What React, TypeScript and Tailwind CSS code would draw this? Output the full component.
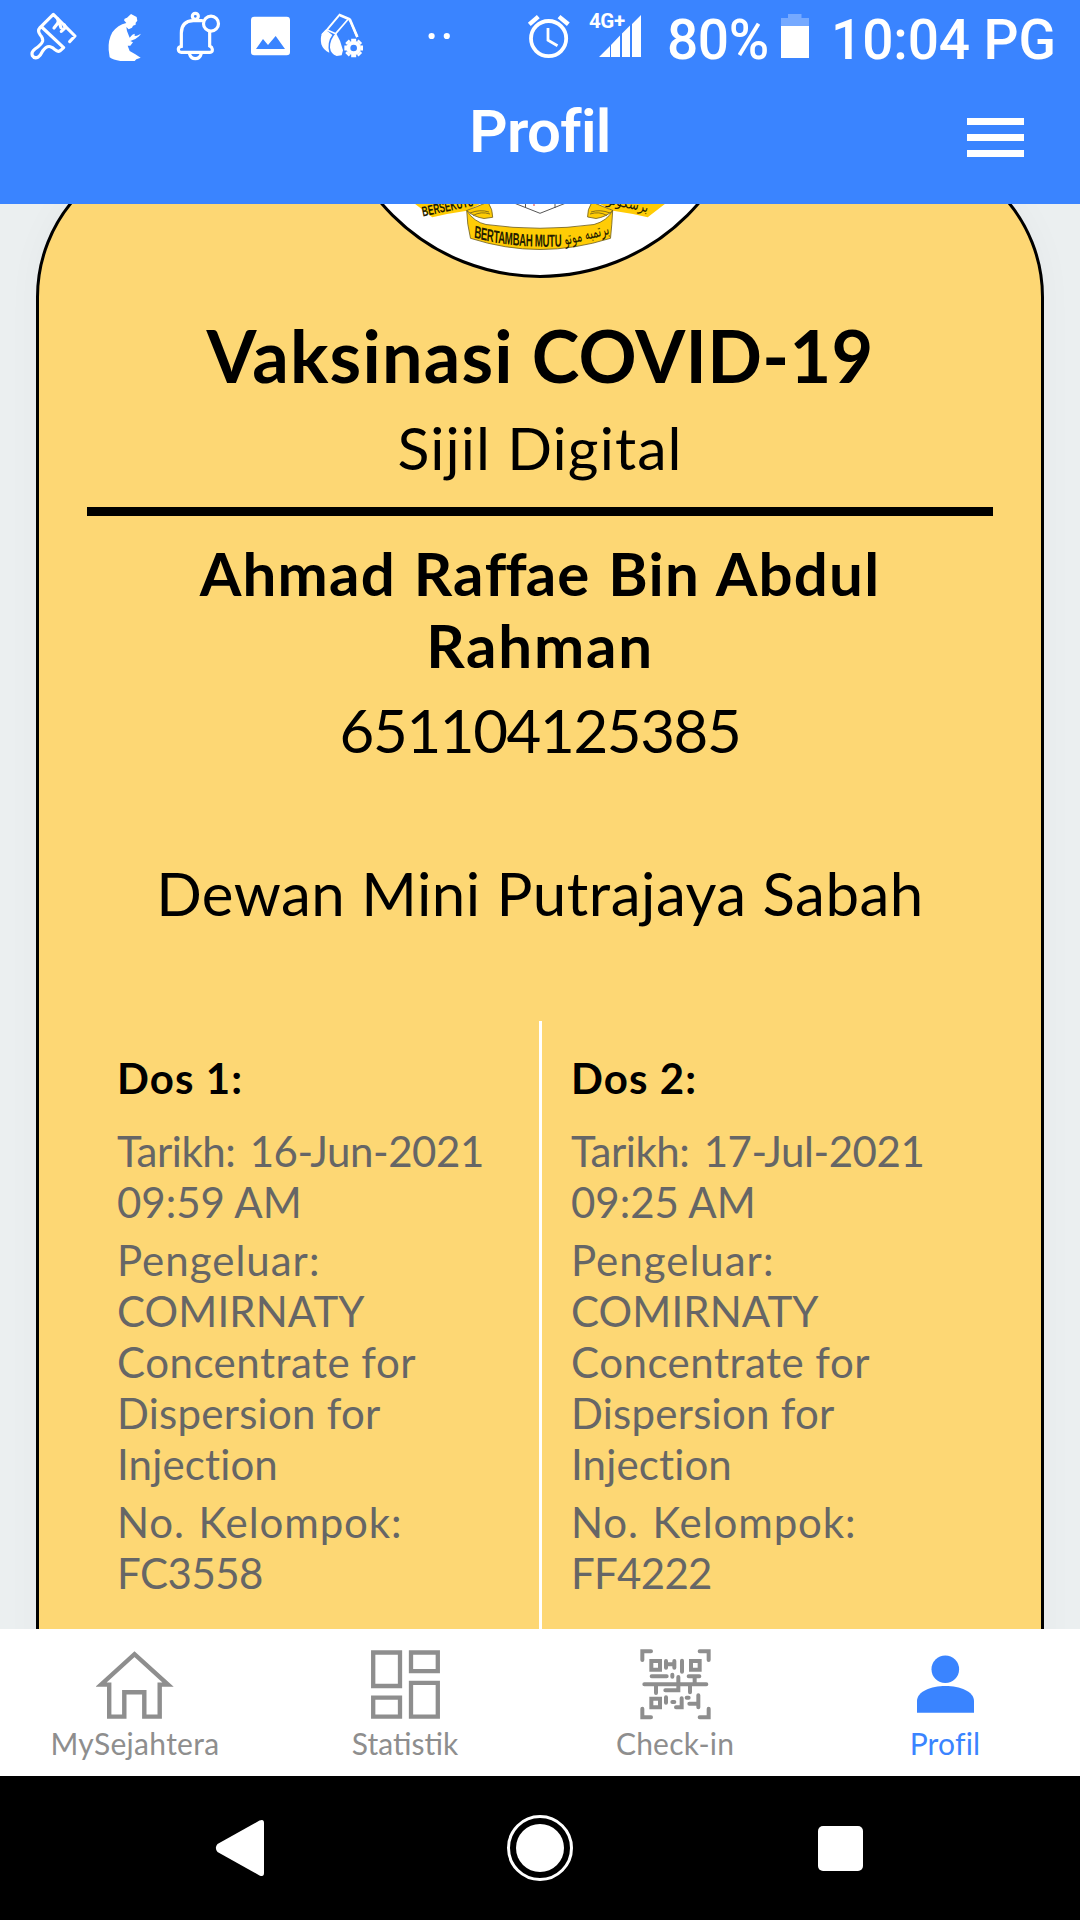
import React from "react";

function StatusBar() {
  return (
    <div className="flex h-[74px] items-start pl-[29.33px] font-['Roboto'] text-[55px] font-medium leading-[80px] whitespace-nowrap text-white">
      {/* paint brush */}
      <svg className="h-[74px] w-[50px] shrink-0" viewBox="28 -15 150 222" fill="none" stroke="currentColor" strokeWidth="9.5" strokeLinecap="round" strokeLinejoin="round">
        <path d="M150 110 L166 93 L101 28 L61 68 Q52 78 62 90 Q70 98 69 108 Q67 118 46 132 Q34 141 38 152 Q44 162 56 156 Q62 152 69 138 Q80 122 92 125 Q100 127 106 134 Q114 142 122 137 L132 128 L66 66" />
        <path d="M114 42 Q118 50 113 56 L103 69 M134 60 Q138 66 134 71 L125 79 M118 50 L124 68" />
      </svg>
      {/* praying figure */}
      <svg className="ml-[27.33px] h-[74px] w-[35px] shrink-0" viewBox="260 -15 105 222" fill="currentColor">
        <path d="M332 27 L349 36 L351 47 L346 53 L346 59 L338 62 L335 68 L325 73 L318 66 L320 78 L328 98 L336 89 L343 86 L343 93 L350 92 L362 86 L356 94 L345 102 L330 108 L338 112 L330 122 L322 122 L328 138 L345 148 L361 158 L348 163 L343 168 L300 168 Q278 165 268 157 L265 135 Q263 105 276 82 Q292 60 318 54 L311 46 L313 41 L320 38 Z" />
      </svg>
      {/* bell */}
      <svg className="ml-[34.33px] h-[74px] w-[46px] shrink-0" viewBox="468 -15 138 222" fill="none" stroke="currentColor" strokeWidth="9.5" strokeLinecap="round">
        <circle cx="526" cy="34" r="9" />
        <path d="M546 47 H520 C496 48 484 62 484 84 V124 Q474 126 475 134 Q476 142 484 142 H570 Q578 142 577 133 Q576 126 569 123 V80" />
        <path d="M508 145 Q512 161 526 161 Q540 161 544 145" />
        <circle cx="573" cy="56" r="22.500" />
      </svg>
      {/* picture */}
      <svg className="ml-[27.67px] h-[74px] w-[41px] shrink-0" viewBox="29 -15 123 222">
        <rect x="32" y="35" width="117" height="116" rx="10" fill="currentColor" />
        <path d="M47 132 L68 102 L83 120 L106 93 L134 132 Z" fill="#3a84ff" />
      </svg>
      {/* carton with gear */}
      <svg className="ml-[29.33px] h-[74px] w-[45px] shrink-0" viewBox="240 -15 135 222" fill="none" stroke="currentColor">
        <path d="M246 90 L262 73 L299 29 L328 41 L352 96" strokeWidth="6" />
        <path d="M262 75 L287 86 L325 42 M300 32 L328 44" strokeWidth="5" />
        <path d="M329 42 L352 96" strokeWidth="8" />
        <path d="M257 74 L277 90 Q260 112 268 143 Q250 136 244 118 Q240 98 246 86 Z" fill="currentColor" stroke="none" />
        <path d="M288 84 Q303 108 309 136 L305 151 L290 153 Q272 146 270 128 Q269 104 288 84 Z" fill="currentColor" stroke="none" />
        <circle cx="341" cy="129" r="16" strokeWidth="12" />
        <path d="M341 101 V109 M341 149 V157 M313 129 H321 M361 129 H369 M321 109 L326 114 M356 144 L361 149 M321 149 L326 144 M356 114 L361 109" strokeWidth="15" />
      </svg>
      <svg className="ml-[63px] h-[74px] w-[22px] shrink-0" viewBox="428 0 22 74" fill="currentColor">
        <circle cx="431.600" cy="36" r="3.100" />
        <circle cx="446.800" cy="36" r="3.100" />
      </svg>
      {/* alarm */}
      <svg className="ml-[76px] h-[74px] w-[46px] shrink-0" viewBox="526 0 46 74" fill="none" stroke="currentColor">
        <circle cx="548.600" cy="38.600" r="17.600" strokeWidth="3.800" />
        <path d="M548 28 V40.300 L557.500 45.800" strokeWidth="2.800" />
        <path d="M529.300 24.300 L538.300 16.600 M559 16.600 L568.300 24.300" strokeWidth="4.400" />
      </svg>
      <div className="relative ml-4 h-[74px] w-[54px] shrink-0">
        <svg className="h-[74px] w-[54px]" viewBox="588 0 54 74" fill="currentColor">
          <path d="M599 57 L610 46 V57 Z M611 45 L620 35.500 V57 H611 Z M622 33.500 L630 25.500 V57 H622 Z M632 24 L641 15 V57 H632 Z" />
        </svg>
        <span className="absolute left-[1px] top-[8.5px] text-[20.5px] leading-[25px] font-bold tracking-[-0.4px]">4G+</span>
      </div>
      <span className="ml-[25px] w-[102px] tracking-[-0.4px]">80%</span>
      <svg className="ml-[12px] h-[74px] w-[28px] shrink-0" viewBox="781 0 28 74" fill="currentColor">
        <path d="M788 14 H801.500 V18 H809 V26 H781 V18 H788 Z" opacity="0.3" />
        <rect x="781" y="26" width="28" height="32" />
      </svg>
      <span className="ml-[22px] tracking-[-0.1px]">10:04 PG</span>
    </div>
  );
}

function Header() {
  return (
    <header className="h-[204px] shrink-0 bg-[#3a84ff] text-white">
      <StatusBar />
      <div className="grid grid-cols-[1fr_auto_1fr]">
        <span />
        <h1 className="font-['Roboto'] text-[60px] font-semibold leading-[116px] tracking-[-0.7px]">Profil</h1>
        <div className="mr-[56px] mt-[44px] flex h-[39px] w-[57px] flex-col justify-between justify-self-end">
          <span className="h-[7px] bg-white" />
          <span className="h-[7px] bg-white" />
          <span className="h-[7px] bg-white" />
        </div>
      </div>
    </header>
  );
}

function Emblem() {
  return (
    <svg className="absolute left-1/2 top-[-292px] h-[420px] w-[420px] -translate-x-1/2" viewBox="330 -142 420 420">
      <defs>
        <path id="motto" d="M862 237.500 Q936 249.500 1040 246" fill="none" />
      </defs>
      <circle cx="540" cy="68" r="208.400" fill="#fff" stroke="#000" strokeWidth="3" />
      <path d="M514 203 L540 213.300 L566 203 M525.500 200 V208 M555 200 V208" fill="none" stroke="#555" strokeWidth="1" />
      <path d="M534 200 V206" stroke="#d33" strokeWidth="1" />
      <g fill="#ffcc05" stroke="#6b5a1c" strokeWidth="0.8" strokeLinejoin="round">
        <path d="M410 200 L432.300 217.300 Q450 213 467 210.700 L488 200 Z" stroke="none" />
        <path d="M670 200 L647.700 217.300 Q630 213 613 210.700 L592 200 Z" stroke="none" />
        <path d="M466.700 210.500 Q476 207 488 202 Q493 210 492.700 217.300 L484 218.500 Q474 217 466.700 210.500 Z" />
        <path d="M613 210.500 Q604 207 592 202 Q587 210 587.600 217 L596 218.500 Q606 217 613 210.500 Z" />
        <path d="M466.700 210.500 Q474 222 486 224.500 Q540 232 594 224.500 Q607 221 612.700 210.500 Q612 224 610.500 238.300 Q575 249.500 540 249.500 Q505 249.500 470.500 238.300 Q467 224 466.700 210.500 Z" />
        <path d="M470 213 Q480 209 489 212 M473 215.500 Q481 211 490 214 M610 213 Q600 209 591 212 M607 215.500 Q599 211 590 214" fill="none" />
      </g>
      <g fill="#231c00">
        <g transform="scale(0.55 1)">
          <text fontFamily="Liberation Sans, sans-serif" fontWeight="700" fontSize="17.500" textLength="160">
            <textPath href="#motto">BERTAMBAH MUTU</textPath>
          </text>
        </g>
        <text transform="translate(587.500 239.500) rotate(-14)" textAnchor="middle" fontFamily="DejaVu Sans, sans-serif" fontSize="17" textLength="46" lengthAdjust="spacingAndGlyphs">برتمبه موتو</text>
        <text transform="translate(423 216.500) rotate(-12) scale(0.6 1)" fontFamily="Liberation Sans, sans-serif" fontWeight="700" fontSize="14">BERSEKUTU</text>
        <text transform="translate(627 208) rotate(12)" textAnchor="middle" fontFamily="DejaVu Sans, sans-serif" fontSize="14" textLength="42" lengthAdjust="spacingAndGlyphs">برسکوتو</text>
      </g>
    </svg>
  );
}

type Line = [text: string, tracking: string];

const doses: { title: string; groups: Line[][] }[] = [
  {
    title: "Dos 1:",
    groups: [
      [["Tarikh: 16-Jun-2021", "tracking-[-0.45px] [word-spacing:4px]"], ["09:59 AM", "tracking-[0px]"]],
      [
        ["Pengeluar:", "tracking-[1px]"],
        ["COMIRNATY", "tracking-[0.1px]"],
        ["Concentrate for", "tracking-[0.5px]"],
        ["Dispersion for", "tracking-[0.25px]"],
        ["Injection", "tracking-[0.15px]"],
      ],
      [["No. Kelompok:", "tracking-[0.9px] [word-spacing:2px]"], ["FC3558", "tracking-[-0.5px]"]],
    ],
  },
  {
    title: "Dos 2:",
    groups: [
      [["Tarikh: 17-Jul-2021", "tracking-[-0.45px] [word-spacing:4px]"], ["09:25 AM", "tracking-[0px]"]],
      [
        ["Pengeluar:", "tracking-[1px]"],
        ["COMIRNATY", "tracking-[0.1px]"],
        ["Concentrate for", "tracking-[0.5px]"],
        ["Dispersion for", "tracking-[0.25px]"],
        ["Injection", "tracking-[0.15px]"],
      ],
      [["No. Kelompok:", "tracking-[0.9px] [word-spacing:2px]"], ["FF4222", "tracking-[-0.7px]"]],
    ],
  },
];

function Certificate() {
  return (
    <main className="h-[1425px] shrink-0 overflow-hidden bg-[#ebeff0] px-9">
      <section className="relative -mt-[57px] h-[1600px] rounded-t-[150px] border-[3px] border-black bg-[#fdd774] pt-[163px] text-center text-black shadow-[0_0_36px_rgba(0,0,0,0.03)]">
        <Emblem />
        <h2 className="text-[72px] font-bold leading-[84px] tracking-[0.3px]">
          <span className="tracking-[1.2px]">Vaksinasi</span> COVID-19
        </h2>
        <p className="mt-[15px] text-[59px] leading-[72px] tracking-[1.1px]">Sijil Digital</p>
        <div className="mx-12 mt-[23px] h-[9px] bg-black" />
        <h3 className="mt-[21px] text-[60px] font-bold leading-[72px]">
          <span className="block tracking-[1.2px] [word-spacing:2px]">
            Ahmad Ra<span className="tracking-[-1px]">ff</span>ae Bin Abdul
          </span>
          <span className="block tracking-[1.8px]">Rahman</span>
        </h3>
        <p className="mt-[13px] text-[60px] leading-[72px] tracking-[-1.4px]">651104125385</p>
        <p className="mt-[91px] text-[60px] leading-[72px] tracking-[0.5px]">Dewan Mini Putrajaya Sabah</p>
        <div className="mt-[92px] grid grid-cols-[503px_1fr] text-left text-[42px] leading-[51px]">
          {doses.map((dose, i) => (
            <div
              key={dose.title}
              className={i === 0 ? "h-[700px] border-r-[3px] border-white pl-[78px] pt-[32px]" : "h-[700px] pl-[29px] pt-[32px]"}
            >
              <h4 className="mb-[22px] font-bold tracking-[1.1px]">{dose.title}</h4>
              {dose.groups.map((group, g) => (
                <div key={g} className="mb-[7px] whitespace-nowrap text-[#666]">
                  {group.map(([text, tracking]) => (
                    <p key={text} className={tracking}>{text}</p>
                  ))}
                </div>
              ))}
            </div>
          ))}
        </div>
      </section>
    </main>
  );
}

function TabBar() {
  return (
    <nav className="grid h-[147px] shrink-0 grid-cols-4 bg-white text-center text-[30px] leading-9 text-[#8e8e8e]">
      <div className="flex flex-col items-center">
        <svg className="h-24 w-[78px]" viewBox="96 1629 78 96" fill="none" stroke="currentColor" strokeWidth="4.400">
          <path d="M109.200 1684.600 H101 L134.500 1654.200 L168 1684.600 H159.700 V1716.600 H144.300 V1692.200 H124.300 V1716.600 H109.200 Z" />
        </svg>
        <span className="tracking-[0.3px]">MySejahtera</span>
      </div>
      <div className="flex flex-col items-center">
        <svg className="h-24 w-[78px]" viewBox="366 1629 78 96" fill="none" stroke="currentColor" strokeWidth="4.300">
          <path d="M373.200 1652.500 H400 V1686 H373.200 Z M411 1652.500 H437.800 V1671.200 H411 Z M373.200 1697.700 H400 V1716.600 H373.200 Z M411 1682.800 H437.800 V1716.600 H411 Z" />
        </svg>
        <span className="tracking-[0px]">Statistik</span>
      </div>
      <div className="flex flex-col items-center">
        <svg className="h-24 w-[78px]" viewBox="48 -18 234 288" fill="none" stroke="currentColor" strokeWidth="12" strokeLinecap="round" strokeLinejoin="miter">
          <path d="M67 75 V49 H93 M239 49 H266 V75 M67 221 V247 H93 M239 247 H266 V221" />
          <path d="M94 78 H120 V104 H94 Z M213 78 H239 V104 H213 Z M94 191 H120 V217 H94 Z" />
          <path d="M138 78 V98 M163 78 V98 M138 88 H163 M186 77 V110" />
          <path d="M95 124 H140 M157 119 V125 M175 126 V166 H136 M206 124 H238 M224 124 V148 M73 148 H259 M108 148 V174 M210 148 V172" />
          <path d="M138 187 V203 M157 201 H163 M185 190 V217 H168 M200 188 H206 M235 181 V217 M208 206 H235" />
        </svg>
        <span className="tracking-[0.2px]">Check-in</span>
      </div>
      <div className="flex flex-col items-center text-[#3a84ff]">
        <svg className="h-24 w-[78px]" viewBox="906 1629 78 96" fill="currentColor">
          <circle cx="945.300" cy="1669.300" r="13.800" />
          <path d="M917 1712.700 V1701 C917 1691.500 931 1686 945.500 1686 S974 1691.500 974 1701 V1712.700 Z" />
        </svg>
        <span className="tracking-[0.2px]">Profil</span>
      </div>
    </nav>
  );
}

function SystemNav() {
  return (
    <div className="grid h-36 shrink-0 grid-cols-3 items-center justify-items-center bg-black px-[90px] text-white">
      <svg className="h-[58px] w-[50px]" viewBox="215 1819 50 58" fill="currentColor">
        <path d="M217.500 1844 L259.500 1820.600 Q264 1818.600 264 1823 V1873 Q264 1877.400 259.500 1875.400 L217.500 1852 Q214.200 1848 217.500 1844 Z" />
      </svg>
      <svg className="h-[68px] w-[68px]" viewBox="0 0 68 68">
        <circle cx="34" cy="34" r="31.500" fill="none" stroke="currentColor" strokeWidth="3" />
        <circle cx="34" cy="34" r="24" fill="currentColor" />
      </svg>
      <span className="h-[45px] w-[45px] rounded-[5px] bg-white" />
    </div>
  );
}

export default function App() {
  return (
    <div className="flex h-[1920px] w-[1080px] flex-col overflow-hidden font-['Lato','Liberation_Sans',sans-serif]">
      <Header />
      <Certificate />
      <TabBar />
      <SystemNav />
    </div>
  );
}
